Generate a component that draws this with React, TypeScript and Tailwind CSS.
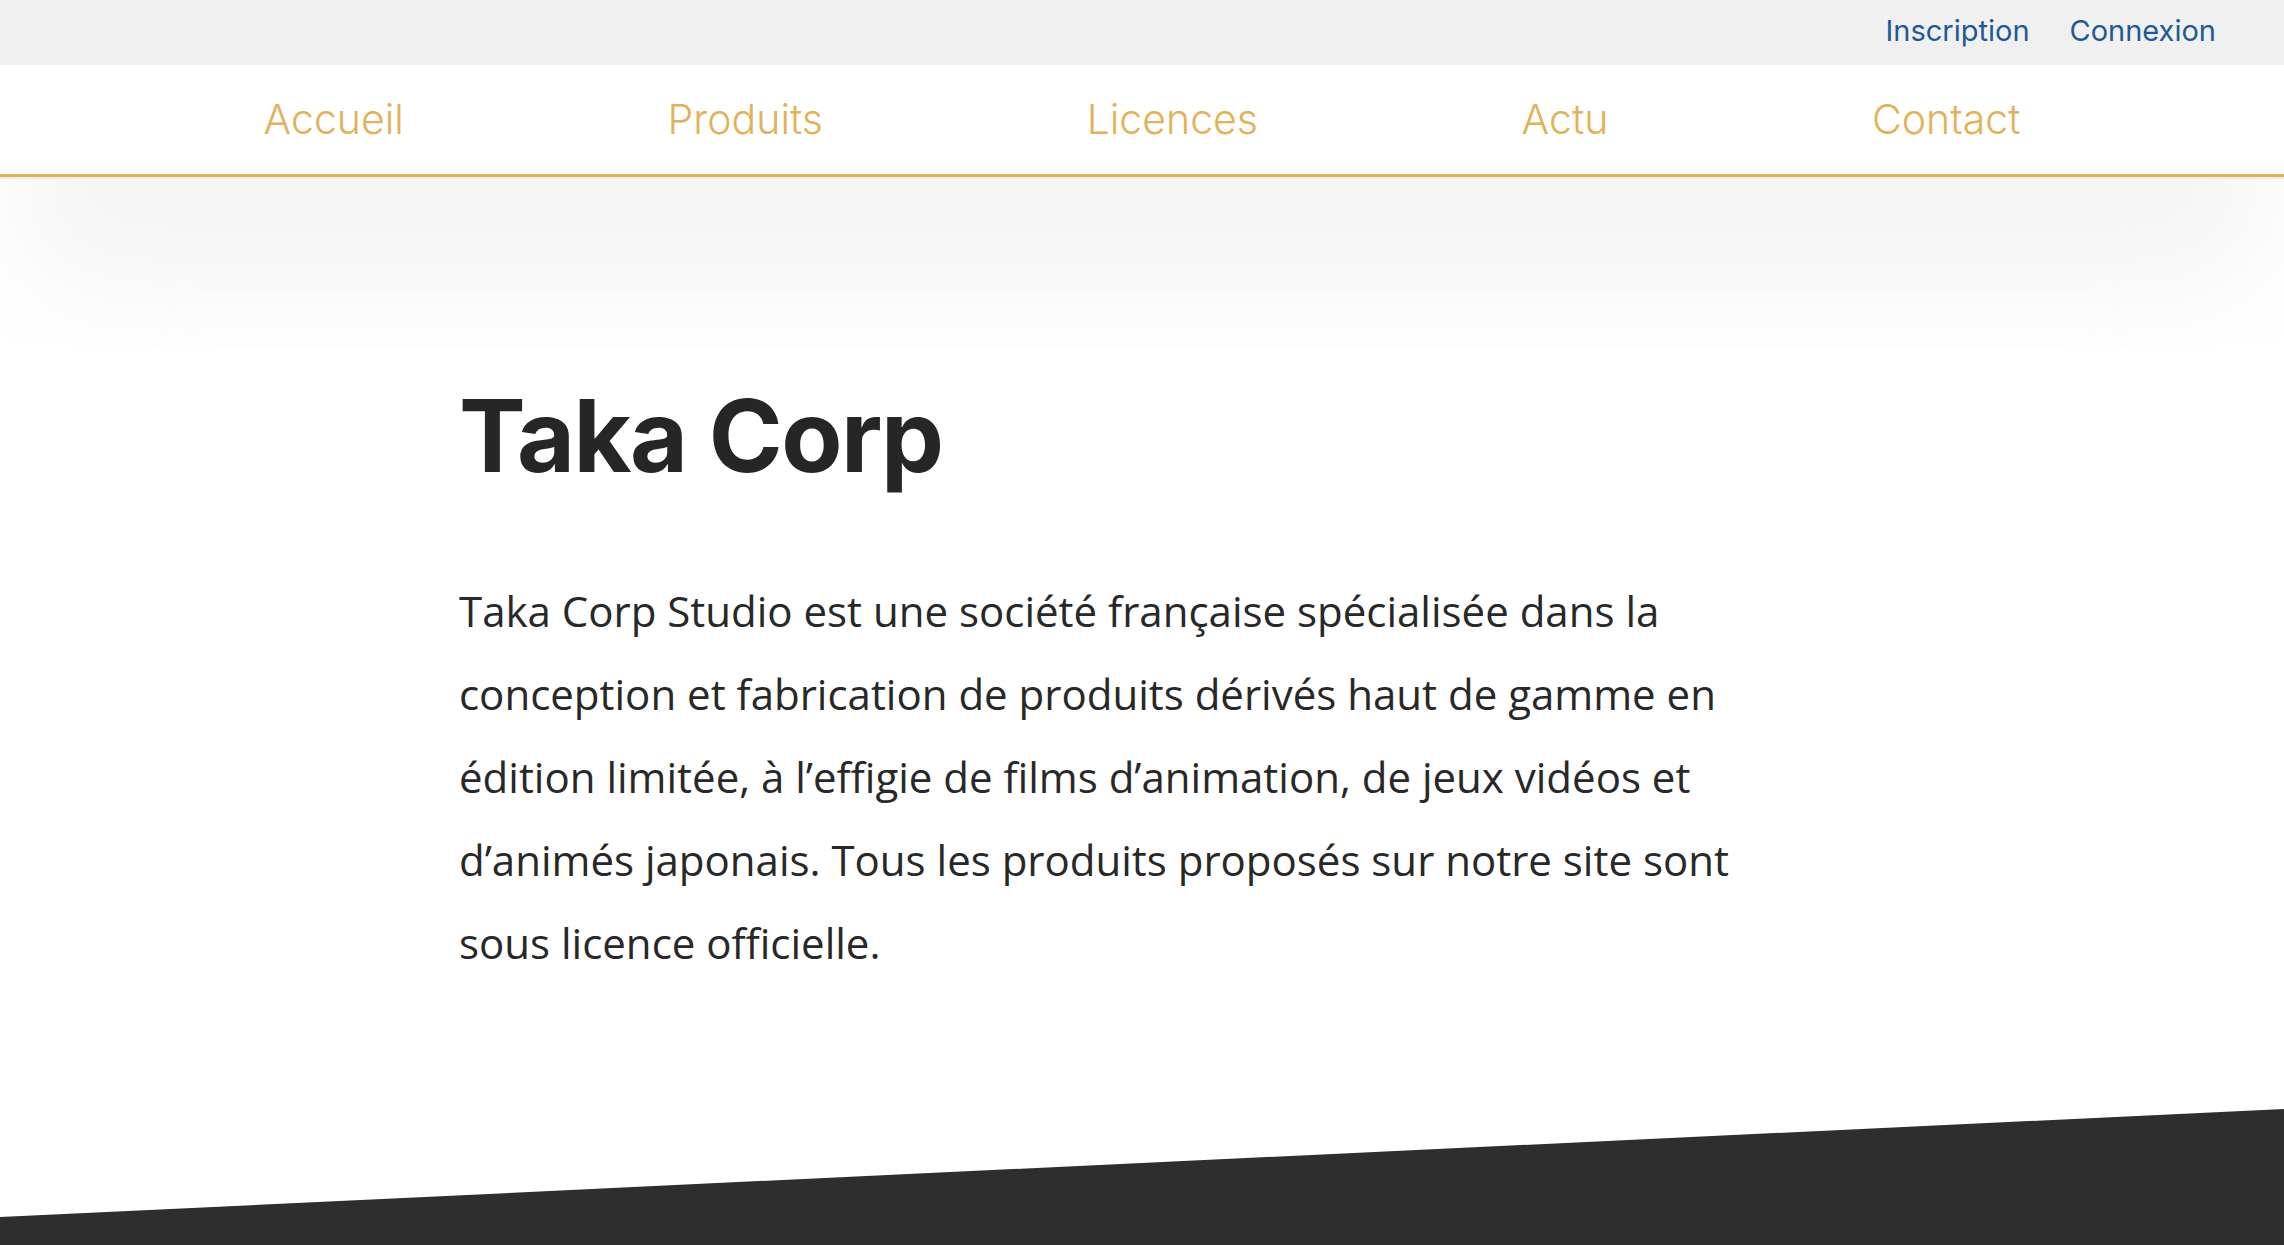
import React from 'react';

const NAV = ['Accueil', 'Produits', 'Licences', 'Actu', 'Contact'];

export default function App() {
  return (
    <div className="min-h-screen flex flex-col bg-white">
      {/* barre du haut */}
      <div className="h-[65px] bg-[#f0f0f0] flex items-center justify-end gap-[40px] pr-[68px] pb-[4px]">
        <a className="text-[29px] text-[#1e5a96] font-['Inter',sans-serif] cursor-pointer">Inscription</a>
        <a className="text-[29px] text-[#1e5a96] font-['Inter',sans-serif] cursor-pointer">Connexion</a>
      </div>

      {/* navigation */}
      <nav className="h-[112px] flex items-center justify-evenly border-b-[3px] border-[#e2b15a] shadow-[0_2px_0_#ebebeb] relative z-10 bg-white">
        {NAV.map(item => (
          <a key={item} className="text-[41px] font-light text-[#e2b15a] font-['Inter',sans-serif] cursor-pointer">
            {item}
          </a>
        ))}
      </nav>

      {/* ombre sous la nav */}
      <div className="h-[170px] overflow-hidden">
        <div className="mx-[10px] -mt-[100px] h-[215px] rounded-[100px] bg-[#f5f5f5] blur-[50px]" />
      </div>

      <main className="flex-1">
        <div className="w-[1366px] mx-auto pt-[39px]">
          <h1 className="text-[100px] leading-none font-bold text-[#262626] font-['Inter',sans-serif] tracking-[-1.5px]">
            Taka Corp
          </h1>
          <p className="mt-[83px] text-[42px] leading-[83px] text-[#282828] font-['Open_Sans',sans-serif]">
            Taka Corp Studio est une société française spécialisée dans la conception et fabrication de produits dérivés haut de gamme en édition limitée, à l’effigie de films d’animation, de jeux vidéos et d’animés japonais. Tous les produits proposés sur notre site sont sous licence officielle.
          </p>
        </div>
      </main>

      <footer className="h-[136px] bg-[#2e2e2e] [clip-path:polygon(0_108px,100%_0,100%_100%,0_100%)]" />
    </div>
  );
}
